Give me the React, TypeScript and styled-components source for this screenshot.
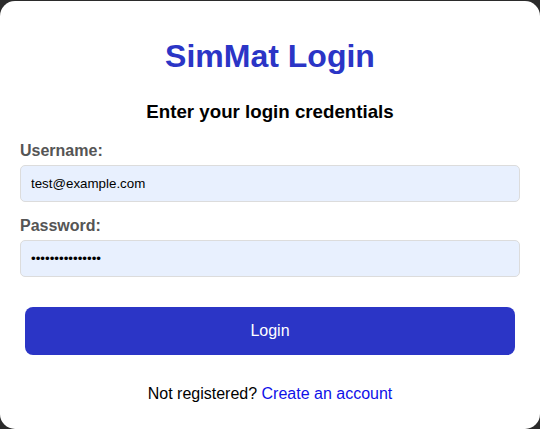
import React from "react";
import styled, { createGlobalStyle } from "styled-components";

const Global = createGlobalStyle`
  html, body { margin: 0; padding: 0; background: #2b2b2b; }
  body { font-family: "Liberation Sans", Arial, sans-serif; }
  * { box-sizing: border-box; }
`;

const Page = styled.div`
  padding-top: 1px;
  height: 429px;
  overflow: hidden;
`;

const Card = styled.div`
  width: 540px;
  height: 428px;
  background: #ffffff;
  border-radius: 15px;
  padding: 20px;
  display: flex;
  flex-direction: column;
`;

const Title = styled.h1`
  margin: 17px 0 0;
  font-size: 32px;
  line-height: 37px;
  font-weight: 700;
  color: #2b35c6;
  text-align: center;
`;

const Subtitle = styled.h3`
  margin: 26px 0 0;
  font-size: 18.72px;
  line-height: 22px;
  font-weight: 700;
  color: #000;
  text-align: center;
`;

const Form = styled.form`
  display: flex;
  flex-direction: column;
  margin-top: 19px;
`;

const Field = styled.div<{ $top: number }>`
  display: flex;
  flex-direction: column;
  margin-top: ${(p) => p.$top}px;
`;

const Label = styled.label`
  font-size: 16px;
  line-height: 18px;
  font-weight: 700;
  color: #555555;
  margin-bottom: 5px;
`;

const Input = styled.input`
  height: 37px;
  width: 100%;
  padding: 0 10px;
  border: 1px solid #dcdcdc;
  border-radius: 5px;
  background: #e8f0fe;
  font-family: "Liberation Sans", Arial, sans-serif;
  font-size: 13.33px;
  color: #000;
  outline: none;
`;

const Button = styled.button`
  margin: 30px 5px 0;
  height: 48px;
  border: none;
  border-radius: 8px;
  background: #2b35c6;
  color: #ffffff;
  font-family: "Liberation Sans", Arial, sans-serif;
  font-size: 16px;
`;

const Footer = styled.p`
  margin: 30px 0 0;
  font-size: 16px;
  line-height: 18px;
  color: #000;
  text-align: center;
`;

const Link = styled.a`
  color: #0f10e8;
  text-decoration: none;
`;

export default function App() {
  return (
    <>
      <Global />
      <Page>
        <Card>
          <Title>SimMat Login</Title>
          <Subtitle>Enter your login credentials</Subtitle>
          <Form onSubmit={(e) => e.preventDefault()}>
            <Field $top={0}>
              <Label htmlFor="u">Username:</Label>
              <Input id="u" type="text" defaultValue="test@example.com" />
            </Field>
            <Field $top={15}>
              <Label htmlFor="p">Password:</Label>
              <Input id="p" type="password" defaultValue="password1234567" />
            </Field>
            <Button type="submit">Login</Button>
          </Form>
          <Footer>
            Not registered? <Link href="#">Create an account</Link>
          </Footer>
        </Card>
      </Page>
    </>
  );
}
